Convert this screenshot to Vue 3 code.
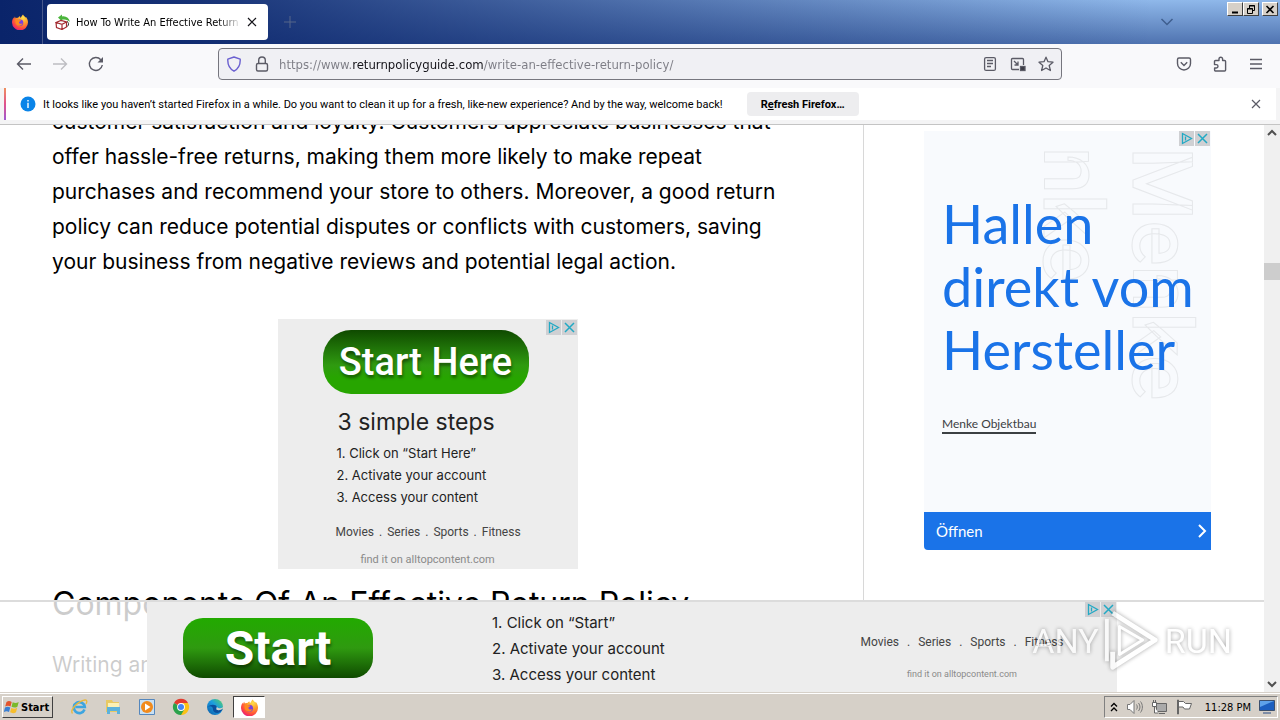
<script setup>
import { ref } from "vue";

const url = ref("https://www.returnpolicyguide.com/write-an-effective-return-policy/");
const showInfo = ref(true);
const showAnchor = ref(true);

const topics = ["Movies", "Series", "Sports", "Fitness"];
const boxSteps = ["1. Click on “Start Here”", "2. Activate your account", "3. Access your content"];
const anchorSteps = ["1. Click on “Start”", "2. Activate your account", "3. Access your content"];
const paragraph = [
  "customer satisfaction and loyalty. Customers appreciate businesses that",
  "offer hassle-free returns, making them more likely to make repeat",
  "purchases and recommend your store to others. Moreover, a good return",
  "policy can reduce potential disputes or conflicts with customers, saving",
  "your business from negative reviews and potential legal action."
];
</script>

<template>
  <div class="browser">
    <svg class="defs" aria-hidden="true">
      <defs>
        <radialGradient id="foxFire" cx="0.7" cy="0.2" r="0.9">
          <stop offset="0" stop-color="#ffe14d" />
          <stop offset="0.4" stop-color="#ff9a2b" />
          <stop offset="0.75" stop-color="#ff4a3d" />
          <stop offset="1" stop-color="#e31587" />
        </radialGradient>
        <linearGradient id="edgeSea" x1="0" y1="1" x2="1" y2="0">
          <stop offset="0" stop-color="#0c59a4" />
          <stop offset="0.55" stop-color="#1b9de2" />
          <stop offset="1" stop-color="#5bd65b" />
        </linearGradient>
        <symbol id="fox" viewBox="0 0 16 16">
          <path fill="url(#foxFire)" d="M11 .4c.5 1 1.5 1.700 2.500 3 .4-.2.5-.5.5-.5 1.300 1.700 2 3.500 2 5.300A8 8 0 0 1 0 8.500c0-2 .7-3.700 1.600-4.900l.3 1.200 1-2.300.8 1.700c.8-.4 1.600-.5 2.400-.4C6.700 2.500 8 2.300 8 2.300L8.500 4C9.500 2.500 10 1.200 11 .4z" />
          <circle cx="8" cy="8.700" r="3.300" fill="#7a3fe0" />
          <path fill="#ff8a20" d="M3.800 5.300c1.500-.5 2.500 0 3.200.6l2 .3c-.3 1-1.500 1.300-2 1.700-.2 1.600 1.600 2.600 3.700 1.400-.7 2.500-4 3.400-5.900 1.600C3.400 9.600 3 7 3.800 5.300z" />
        </symbol>
      </defs>
    </svg>

    <header class="titlebar">
      <div class="fx-view"><svg width="16" height="16"><use href="#fox" /></svg></div>
      <div class="tab">
        <svg class="favicon" width="16" height="16" viewBox="0 0 16 16" fill="none">
          <path d="M3 3.500L7 .5v2c4-.7 7 1.500 8 5.500-2-2-4.500-3-8-2.300v1.800z" fill="#4bb53c" />
          <path d="M1 8.500l5-2 5.500 1.500-4.500 2.300zM1 8.500l.5 5L7 15.500v-5.200M11.500 8v5L7 15.500" stroke="#a32a2f" stroke-width="1.200" />
          <path d="M12 7.500c2 1 2 3 .5 5" stroke="#333" />
        </svg>
        <span class="tab-title">How To Write An Effective Return Policy</span>
        <button class="plain" aria-label="Close tab">
          <svg width="10" height="10" viewBox="0 0 10 10"><path d="M1 1l8 8M9 1L1 9" stroke="#15141a" stroke-width="1.200" /></svg>
        </button>
      </div>
      <button class="plain new-tab" aria-label="New tab">
        <svg width="12" height="12" viewBox="0 0 12 12"><path d="M6 0v12M0 6h12" stroke="#56678a" /></svg>
      </button>
      <button class="plain all-tabs" aria-label="List all tabs">
        <svg width="14" height="8" viewBox="0 0 14 8" fill="none"><path d="M1.500 1L7 6.500 12.500 1" stroke="#3f5f8e" stroke-width="1.500" /></svg>
      </button>
      <div class="win-buttons">
        <button aria-label="Minimize"><svg width="10" height="9" viewBox="0 0 10 9"><path d="M2 7.500h6" stroke="#000" stroke-width="2" /></svg></button>
        <button aria-label="Restore"><svg width="10" height="9" viewBox="0 0 10 9" fill="none" stroke="#000"><path d="M3.500 3V.5h5v5H7M3 1h6M1 4h6" /><path d="M1.500 3.500h5v5h-5z" /></svg></button>
        <button class="win-close" aria-label="Close"><svg width="10" height="9" viewBox="0 0 10 9"><path d="M1.500 1l7 7M8.500 1l-7 7" stroke="#000" stroke-width="1.600" /></svg></button>
      </div>
    </header>

    <nav class="toolbar">
      <button class="plain" aria-label="Back">
        <svg width="16" height="16" viewBox="0 0 16 16" fill="none"><path d="M15 8H1.500M7 2.500L1.500 8 7 13.500" stroke="#5b5b66" stroke-width="1.400" /></svg>
      </button>
      <button class="plain" aria-label="Forward" disabled>
        <svg width="16" height="16" viewBox="0 0 16 16" fill="none"><path d="M1 8h13.500M9 2.500L14.500 8 9 13.500" stroke="#bdbdc2" stroke-width="1.400" /></svg>
      </button>
      <button class="plain" aria-label="Reload">
        <svg width="16" height="16" viewBox="0 0 16 16" fill="none"><path d="M14.300 9A6.500 6.500 0 1 1 12.800 3.700" stroke="#5b5b66" stroke-width="1.400" /><path d="M15 1v5.500H9.500z" fill="#5b5b66" /></svg>
      </button>
      <div class="urlbar">
        <svg width="16" height="16" viewBox="0 0 16 16" fill="none"><path d="M8 1l6.200 2.200c.3 5.500-1.700 9.500-6.200 12-4.500-2.500-6.500-6.500-6.200-12z" stroke="#6a5fd0" stroke-width="1.400" stroke-linejoin="round" /></svg>
        <svg width="16" height="16" viewBox="0 0 16 16" fill="none" stroke="#5b5b66" stroke-width="1.400"><rect x="2.500" y="7.500" width="11" height="7.500" rx="1.500" /><path d="M4.700 7.500V4.300a3.300 3.300 0 0 1 6.600 0v3.200" /></svg>
        <input v-model="url" class="url" type="text" aria-label="Address" spellcheck="false" />
        <button class="plain" aria-label="Reader view">
          <svg width="16" height="16" viewBox="0 0 16 16" fill="none" stroke="#5b5b66" stroke-width="1.300"><rect x="2.600" y="1.600" width="10.800" height="12.800" rx="1.500" /><path d="M5 4.500h6M5 7.500h6M5 10.500h4" /></svg>
        </button>
        <button class="plain" aria-label="Picture in picture">
          <svg width="16" height="16" viewBox="0 0 16 16" fill="none" stroke="#5b5b66" stroke-width="1.300"><path d="M9 13.500H2.500a1 1 0 0 1-1-1v-9a1 1 0 0 1 1-1h10a1 1 0 0 1 1 1V9M4 5l4 4M8 5.500V9H4.500" /><rect x="10.500" y="10.500" width="4.500" height="4" fill="#3c3c46" /></svg>
        </button>
        <button class="plain" aria-label="Bookmark">
          <svg width="16" height="16" viewBox="0 0 16 16" fill="none"><path d="M8 1.200l2 4.500 5 .5-3.800 3.300 1.200 5L8 12l-4.400 2.500 1.200-5L1 6.200l5-.5z" stroke="#5b5b66" stroke-width="1.300" stroke-linejoin="round" /></svg>
        </button>
      </div>
      <div class="tools">
        <button class="plain" aria-label="Pocket">
          <svg width="16" height="16" viewBox="0 0 16 16" fill="none" stroke="#5b5b66" stroke-width="1.400"><path d="M3 2h10a1.500 1.500 0 0 1 1.500 1.500V7.500a6.500 6.500 0 0 1-13 0v-4A1.500 1.500 0 0 1 3 2z" /><path d="M4.800 6.300L8 9.500l3.200-3.200" /></svg>
        </button>
        <button class="plain" aria-label="Extensions">
          <svg width="16" height="16" viewBox="0 0 16 16" fill="none" stroke="#5b5b66" stroke-width="1.400" stroke-linejoin="round"><path d="M2.500 7V5.500a1 1 0 0 1 1-1H7V3a1.800 1.800 0 0 1 3.600 0v1.500h2a1 1 0 0 1 1 1v8.500a1 1 0 0 1-1 1h-9a1 1 0 0 1-1-1V12h1.700a1.700 1.700 0 0 0 0-3.400H2.500z" /></svg>
        </button>
        <button class="plain" aria-label="Menu">
          <svg width="16" height="16" viewBox="0 0 16 16"><path d="M2 3.500h12M2 8h12M2 12.500h12" stroke="#5b5b66" stroke-width="1.300" /></svg>
        </button>
      </div>
    </nav>

    <div class="infobar-wrap">
      <div v-if="showInfo" class="infobar">
        <svg width="16" height="16" viewBox="0 0 16 16"><circle cx="8" cy="8" r="7.500" fill="#0a84e8" /><path d="M8 6.800V12M8 4v1.600" stroke="#fff" stroke-width="1.400" /></svg>
        <span class="info-text">It looks like you haven’t started Firefox in a while. Do you want to clean it up for a fresh, like-new experience? And by the way, welcome back!</span>
        <button class="refresh">R<u>e</u>fresh Firefox…</button>
        <button class="plain info-close" aria-label="Dismiss" @click="showInfo = false">
          <svg width="10" height="10" viewBox="0 0 10 10"><path d="M1 1l8 8M9 1L1 9" stroke="#5b5b66" stroke-width="1.200" /></svg>
        </button>
      </div>
    </div>

    <div class="viewport">
      <div class="page">
        <main class="article">
          <p class="text">
            <template v-for="line in paragraph" :key="line">{{ line }}<br /></template>
          </p>
          <section class="box-ad">
            <a class="start-here" href="#">Start Here</a>
            <div class="box-copy">
              <h3>3 simple steps</h3>
              <ul class="steps">
                <li v-for="step in boxSteps" :key="step">{{ step }}</li>
              </ul>
              <div class="topics">
                <template v-for="(topic, i) in topics" :key="topic"><span v-if="i">.</span><span>{{ topic }}</span></template>
              </div>
            </div>
            <p class="find">find it on alltopcontent.com</p>
            <div class="ad-marks">
              <a href="#" aria-label="AdChoices"><svg width="15" height="15" viewBox="0 0 15 15" fill="none" stroke="#22a9c4" stroke-width="1.300"><path d="M3.500 2.500v10l9-5z" /><path d="M6.500 5.500v4" /></svg></a>
              <button aria-label="Close ad"><svg width="15" height="15" viewBox="0 0 15 15"><path d="M3 3l9 9M12 3l-9 9" stroke="#22a9c4" stroke-width="1.500" /></svg></button>
            </div>
          </section>
          <h2>Components Of An Effective Return Policy</h2>
          <p class="text">Writing an</p>
        </main>

        <aside class="sidebar">
          <section class="side-ad">
            <div class="ghost" aria-hidden="true">Menke<br />nke</div>
            <div class="side-body">
              <h1>Hallen<br />direkt vom<br />Hersteller</h1>
              <a class="advertiser" href="#">Menke Objektbau</a>
            </div>
            <a class="open" href="#">
              <span>Öffnen</span>
              <svg width="10" height="14" viewBox="0 0 10 14" fill="none"><path d="M2 1l6 6-6 6" stroke="#fff" stroke-width="2" /></svg>
            </a>
            <div class="ad-marks">
              <a href="#" aria-label="AdChoices"><svg width="15" height="15" viewBox="0 0 15 15" fill="none" stroke="#22a9c4" stroke-width="1.300"><path d="M3.500 2.500v10l9-5z" /><path d="M6.500 5.500v4" /></svg></a>
              <button aria-label="Close ad"><svg width="15" height="15" viewBox="0 0 15 15"><path d="M3 3l9 9M12 3l-9 9" stroke="#22a9c4" stroke-width="1.500" /></svg></button>
            </div>
          </section>
        </aside>

        <div v-if="showAnchor" class="anchor">
          <section class="anchor-ad">
            <a class="start" href="#">Start</a>
            <ul class="steps">
              <li v-for="step in anchorSteps" :key="step">{{ step }}</li>
            </ul>
            <div class="anchor-side">
              <div class="topics">
                <template v-for="(topic, i) in topics" :key="topic"><span v-if="i">.</span><span>{{ topic }}</span></template>
              </div>
              <p class="find">find it on alltopcontent.com</p>
            </div>
            <div class="ad-marks">
              <a href="#" aria-label="AdChoices"><svg width="15" height="15" viewBox="0 0 15 15" fill="none" stroke="#22a9c4" stroke-width="1.300"><path d="M3.500 2.500v10l9-5z" /><path d="M6.500 5.500v4" /></svg></a>
              <button aria-label="Close ad" @click="showAnchor = false"><svg width="15" height="15" viewBox="0 0 15 15"><path d="M3 3l9 9M12 3l-9 9" stroke="#22a9c4" stroke-width="1.500" /></svg></button>
            </div>
          </section>
        </div>

        <div class="watermark">
          <span>ANY</span>
          <svg width="58" height="64" viewBox="0 0 60 66" fill="none" stroke="#fff" stroke-linejoin="round">
            <path d="M10 4l44 28-44 28V44" stroke-width="5" />
            <path d="M17 18l24 14-24 15z" stroke-width="3" />
            <path d="M4 10v44" stroke-width="4" />
          </svg>
          <span>RUN</span>
        </div>
      </div>
      <div class="scrollbar">
        <svg width="16" height="16" viewBox="0 0 16 16" fill="none"><path d="M4 10l4-4 4 4" stroke="#505050" stroke-width="2" /></svg>
        <div class="thumb"></div>
        <svg width="16" height="16" viewBox="0 0 16 16" fill="none"><path d="M4 6l4 4 4-4" stroke="#505050" stroke-width="2" /></svg>
      </div>
    </div>

    <footer class="taskbar">
      <button class="start-menu">
        <svg width="16" height="16" viewBox="0 0 16 16">
          <path d="M2.500 3C4.500 1.500 6 2 7.700 3L6.500 7.500C4.700 6.500 3.200 6.500 1.200 7.500z" fill="#e3542c" />
          <path d="M8.700 3.300c2 1 3.800 1 6-.3l-1.300 4.700c-2 1.200-4 1-5.900.1z" fill="#7ab929" />
          <path d="M1 8.500c2-1 3.500-1 5.300 0L5 13c-1.700-1-3.300-1-5.200 0z" fill="#3a7fd2" />
          <path d="M7.300 8.900c2 1 3.900 1 5.900-.1L12 13.300c-2 1.200-4 1-5.900 0z" fill="#f7be2c" />
        </svg>
        <span>Start</span>
      </button>
      <div class="quick">
        <button class="plain" aria-label="Internet Explorer">
          <svg width="18" height="18" viewBox="0 0 18 18" fill="none"><path d="M14.500 11.500A5.500 5.500 0 1 1 14.800 9H5.500" stroke="#3da5e0" stroke-width="2.600" /><path d="M2.500 15.500C-.5 12 8 3 15 2c2.500-.2 2 2.500 1 4" stroke="#e9b83a" stroke-width="1.300" /></svg>
        </button>
        <button class="plain" aria-label="Explorer">
          <svg width="18" height="18" viewBox="0 0 18 18"><path d="M2 2h6l1 2h6v10H2z" fill="#e8c964" /><path d="M4 5h11v6H4z" fill="#fbf1b5" /><path d="M3 9h13v7h-3v-3H6v3H3z" fill="#5cb2dc" /></svg>
        </button>
        <button class="plain" aria-label="Media Player">
          <svg width="18" height="18" viewBox="0 0 18 18"><path d="M1.500 1.500h15v15h-15z" fill="#c9e0f3" stroke="#5587bd" /><circle cx="9" cy="9" r="6" fill="#f18a1c" /><path d="M7 5.500v7L12.500 9z" fill="#fff" /></svg>
        </button>
        <button class="plain" aria-label="Chrome">
          <svg width="18" height="18" viewBox="0 0 18 18"><path d="M9 9L2 5a8 8 0 0 1 14 0z" fill="#e33b2e" /><path d="M9 9V5h7a8 8 0 0 1-7 12z" fill="#fbc116" /><path d="M9 9l3 3-3 5A8 8 0 0 1 2 5z" fill="#2ba24c" /><circle cx="9" cy="9" r="3.900" fill="#fff" /><circle cx="9" cy="9" r="3" fill="#4285f4" /></svg>
        </button>
        <button class="plain" aria-label="Edge">
          <svg width="18" height="18" viewBox="0 0 18 18"><circle cx="9" cy="9" r="8" fill="url(#edgeSea)" /><path d="M17 10c-1 2-5 3-6.500 1.500-.7-.8.5-1.300.2-2.800C10 6 4 6 2 9c2-1.500 5-.5 5 2.500 0 3 3.500 4 6.500 3 1.500-.7 2.500-2 3.500-4.500z" fill="#0c4f9c" /><path d="M17 10c-1 2-5 3-6.500 1.500-.7-.8.5-1.300.2-2.800 2 2 4.500 1.800 6.300.5z" fill="#d6d0c8" /></svg>
        </button>
        <button class="task" aria-label="Firefox"><svg width="17" height="17"><use href="#fox" /></svg></button>
      </div>
      <div class="tray">
        <svg width="8" height="10" viewBox="0 0 8 10" fill="none"><path d="M1 4.500l3-3 3 3M1 9l3-3 3 3" stroke="#000" stroke-width="1.300" /></svg>
        <svg width="17" height="16" viewBox="0 0 17 16" fill="#fff" stroke="#777"><path d="M1.500 5.500H4l4-4v13l-4-4H1.500z" /><path d="M10.500 5.500c1 1.500 1 3.500 0 5M12.500 4c2 2.500 2 5.500 0 8M14.500 2.500c2.500 3 2.500 8 0 11" fill="none" /></svg>
        <svg width="17" height="16" viewBox="0 0 17 16" fill="#fff" stroke="#666"><path d="M5.500 4.500h10v8h-10z" fill="#aaa" /><path d="M8 14.500h6M1.500 3.500h4v4h-4zM2.500 1v2M4.500 1v2M3.500 8v6h4" /></svg>
        <svg width="17" height="16" viewBox="0 0 17 16" fill="#fff" stroke="#666"><path d="M1.500 1v14h1V1zM2.500 2.500h5l2 2h6l-2 5.500H8.500l-1.500-2H2.500z" /></svg>
        <time>11:28 PM</time>
        <svg width="16" height="14" viewBox="0 0 16 14"><path d="M.5.5h15v10H.5z" fill="#1c5fc0" stroke="#3c506e" /><path d="M1 1h14L1 7z" fill="#5ea2ea" /><path d="M4 12h8v2H4z" fill="#7e8da6" /></svg>
      </div>
    </footer>
  </div>
</template>

<style>
body {
  margin: 0;
}
</style>

<style scoped>
.browser {
  display: flex;
  flex-direction: column;
  height: 100vh;
  overflow: hidden;
  background: #fff;
  color: #000;
  font-family: "DejaVu Sans Condensed", "DejaVu Sans", sans-serif;
  font-size: 11px;
}

.browser * {
  box-sizing: border-box;
}

.defs {
  position: absolute;
  width: 0;
  height: 0;
}

svg {
  display: block;
  flex: none;
}

button {
  font: inherit;
  color: inherit;
}

.plain {
  display: flex;
  padding: 0;
  border: 0;
  background: none;
}

h1,
h2,
h3,
p,
ul {
  margin: 0;
  padding: 0;
  font-weight: 400;
  list-style: none;
}

/* title bar */
.titlebar {
  position: relative;
  display: flex;
  align-items: center;
  flex: none;
  height: 44px;
  padding-right: 106px;
  background:
    linear-gradient(to right, #0a246a 0%, rgba(10, 36, 106, 0.9) 15%, rgba(10, 36, 106, 0) 90%),
    linear-gradient(to bottom, #8fb8ea, #4f73b0);
}

.fx-view {
  display: flex;
  align-items: center;
  width: 43px;
  height: 100%;
  padding-left: 12px;
  border-right: 1px solid #48598c;
}

.tab {
  display: flex;
  align-items: center;
  gap: 5px;
  width: 221px;
  height: 36px;
  margin-left: 4px;
  padding: 0 11px 0 8px;
  border-radius: 4px;
  background: #fff;
}

.tab-title {
  flex: 1;
  overflow: hidden;
  white-space: nowrap;
  mask-image: linear-gradient(to left, transparent, #000 24px);
}

.new-tab {
  margin-left: 16px;
}

.all-tabs {
  margin-left: auto;
}

.win-buttons {
  position: absolute;
  top: 2px;
  right: 2px;
  display: flex;
}

.win-buttons button {
  display: flex;
  align-items: center;
  justify-content: center;
  width: 16px;
  height: 14px;
  padding: 0;
  border: 1px solid;
  border-color: #fff #404040 #404040 #fff;
  background: #d6d0c8;
}

.win-buttons .win-close {
  margin-left: 3px;
}

/* navigation toolbar */
.toolbar {
  display: flex;
  align-items: center;
  flex: none;
  gap: 20px;
  height: 44px;
  padding: 0 16px 4px;
  background: #f9f9fb;
}

.urlbar {
  display: flex;
  align-items: center;
  flex: 1;
  gap: 12px;
  height: 32px;
  margin-left: 94px;
  padding: 0 7px;
  border: 1px solid #76767e;
  border-radius: 4px;
  background: #f0f0f4;
}

.url {
  flex: 1;
  min-width: 0;
  margin-left: -3px;
  padding: 0;
  border: 0;
  outline: 0;
  background: linear-gradient(to right, #7c7c84 74px, #15141a 74px, #15141a 205px, #7c7c84 205px);
  background-clip: text;
  -webkit-text-fill-color: transparent;
  font-family: "DejaVu Sans Condensed", sans-serif;
  font-size: 13px;
}

.tools {
  display: flex;
  gap: 20px;
  margin-left: 94px;
}

/* notification bar */
.infobar-wrap {
  flex: none;
  padding: 0 4px 4px;
  border-bottom: 1px solid #c4c4c4;
  background: #f4f4f5;
}

.infobar {
  display: flex;
  align-items: center;
  height: 32px;
  padding: 0 15px 0 14px;
  border-left: 2px solid;
  border-image: linear-gradient(#f0945c, #e0528c, #9a5ad6) 1;
  background: #fff;
  font-family: Roboto, sans-serif;
  font-size: 11px;
}

.info-text {
  margin-left: 7px;
  white-space: nowrap;
}

.refresh {
  width: 112px;
  height: 24px;
  margin-left: 24px;
  padding: 0;
  border: 0;
  border-radius: 4px;
  background: #ededef;
  font-weight: 700;
}

.info-close {
  margin-left: auto;
}

/* web page */
.viewport {
  display: flex;
  flex: 1;
  min-height: 0;
}

.page {
  position: relative;
  display: grid;
  grid-template-columns: minmax(0, 1fr) 401px;
  flex: 1;
  min-width: 0;
  overflow: hidden;
  font-family: Inter, "Open Sans", sans-serif;
}

.article {
  margin-top: -21px;
  padding: 0 60px 0 52px;
  white-space: nowrap;
}

.text {
  font-size: 21px;
  line-height: 35px;
}

.article h2 {
  margin: 12px 0 20px;
  font-size: 32px;
  line-height: 46px;
}

.ad-marks {
  position: absolute;
  top: 1px;
  right: 1px;
  display: flex;
  gap: 1px;
}

.side-ad .ad-marks {
  top: 0;
}

.ad-marks a,
.ad-marks button {
  padding: 0;
  border: 0;
  background: #cfd0d3;
}

.box-ad {
  position: relative;
  display: flex;
  flex-direction: column;
  align-items: center;
  width: 300px;
  height: 250px;
  margin: 40px auto 0;
  padding-top: 11px;
  background: #ededed;
  color: #222;
}

.start-here,
.start {
  display: flex;
  align-items: center;
  justify-content: center;
  color: #fff;
  font-family: Roboto, sans-serif;
  text-decoration: none;
  text-shadow: 1px 3px 3px rgba(0, 0, 0, 0.4);
}

.start-here {
  width: 206px;
  height: 64px;
  margin-right: 4px;
  border-radius: 28px;
  background: linear-gradient(#0f4a00, #2f9a10 55%, #27a500 75%);
  font-size: 38px;
  font-weight: 500;
}

.box-copy {
  width: 188px;
  margin-top: 12px;
}

.box-copy h3 {
  margin-left: 4px;
  font-size: 23px;
  line-height: 33px;
}

.box-copy .steps {
  margin: 3px 0 0 3px;
  font-size: 13px;
  line-height: 22px;
}

.topics {
  display: flex;
  gap: 5px;
  color: #444;
  font-family: Roboto, sans-serif;
  font-size: 12px;
  line-height: 18px;
}

.box-copy .topics {
  margin: 15px 0 0 2px;
}

.find {
  color: #8a8a8a;
  font-family: Roboto, sans-serif;
  font-size: 11px;
  line-height: 16px;
}

.box-ad .find {
  margin-top: 11px;
}

.sidebar {
  padding: 6px 53px 0 60px;
  border-left: 1px solid #d8d8d8;
}

.side-ad {
  position: relative;
  display: flex;
  flex-direction: column;
  height: 419px;
  overflow: hidden;
  border-radius: 0 0 0 4px;
  background: #f8fafd;
}

.side-body {
  position: relative;
  flex: 1;
  padding: 61px 0 0 18px;
}

.side-body h1 {
  color: #1a73e8;
  font-family: Lato, sans-serif;
  font-size: 54px;
  line-height: 63px;
  white-space: nowrap;
}

.advertiser {
  display: inline-block;
  margin-top: 35px;
  border-bottom: 2px solid #3c4043;
  color: #3c4043;
  font-family: Lato, sans-serif;
  font-size: 12px;
  line-height: 16px;
  text-decoration: none;
}

.ghost {
  position: absolute;
  top: 16px;
  right: 5px;
  color: transparent;
  font-family: Roboto, sans-serif;
  font-size: 84px;
  font-weight: 500;
  line-height: 89px;
  writing-mode: vertical-rl;
  -webkit-text-stroke: 1px #e6e8eb;
}

.open {
  display: flex;
  align-items: center;
  justify-content: space-between;
  height: 38px;
  padding: 0 4px 0 12px;
  background: #1a73e8;
  color: #fff;
  font-family: Lato, sans-serif;
  font-size: 15px;
  text-decoration: none;
}

/* anchored ad over the bottom of the page */
.anchor {
  position: absolute;
  right: 0;
  bottom: 0;
  left: 0;
  display: flex;
  justify-content: center;
  height: 92px;
  border-top: 2px solid #dcdcdc;
  background: rgba(255, 255, 255, 0.8);
}

.anchor-ad {
  position: relative;
  display: flex;
  width: 970px;
  height: 90px;
  background: #ededed;
  color: #222;
}

.start {
  width: 190px;
  height: 60px;
  margin: 16px 0 0 36px;
  border-radius: 20px;
  background: linear-gradient(#22aa00, #2f9a10 50%, #0f4a00);
  font-size: 48px;
  font-weight: 700;
}

.anchor-ad .steps {
  margin: 8px 0 0 119px;
  font-size: 15px;
  line-height: 26px;
}

.anchor-side {
  display: flex;
  flex-direction: column;
  align-items: center;
  width: 206px;
  margin: 31px 52px 0 auto;
}

.anchor-side .topics {
  gap: 8px;
}

.anchor-side .find {
  margin-top: 15px;
  font-size: 9px;
}

.anchor .ad-marks {
  top: 0;
}

.watermark {
  position: absolute;
  right: 32px;
  bottom: 19px;
  display: flex;
  align-items: center;
  gap: 4px;
  color: #fff;
  font-family: Roboto, sans-serif;
  font-size: 34px;
  opacity: 0.7;
  filter: drop-shadow(0 0 2px rgba(0, 0, 0, 0.5));
}

.scrollbar {
  display: flex;
  flex-direction: column;
  width: 16px;
  background: #f0f0f0;
}

.thumb {
  height: 17px;
  margin: 122px 0 auto;
  background: #cdcdcd;
}

/* taskbar */
.taskbar {
  display: flex;
  align-items: center;
  flex: none;
  height: 28px;
  padding: 1px 2px 0;
  border-top: 1px solid #d6d0c8;
  background: #d6d0c8;
  box-shadow: inset 0 1px #fff;
}

.start-menu {
  display: flex;
  align-items: center;
  gap: 1px;
  height: 22px;
  padding: 0 3px 0 1px;
  border: 1px solid;
  border-color: #fff #404040 #404040 #fff;
  background: #d6d0c8;
  font-weight: 700;
}

.quick {
  display: flex;
  align-items: center;
  gap: 16px;
  margin-left: 17px;
}

.task {
  display: flex;
  align-items: center;
  justify-content: center;
  width: 32px;
  height: 22px;
  margin-left: -7px;
  padding: 0;
  border: 1px solid;
  border-color: #404040 #fff #fff #404040;
  background: #fff;
}

.tray {
  display: flex;
  align-items: center;
  gap: 8px;
  height: 22px;
  margin-left: auto;
  padding: 0 2px 0 5px;
  border: 1px solid;
  border-color: #808080 #fff #fff #808080;
}

.tray time {
  margin-left: 4px;
}
</style>
